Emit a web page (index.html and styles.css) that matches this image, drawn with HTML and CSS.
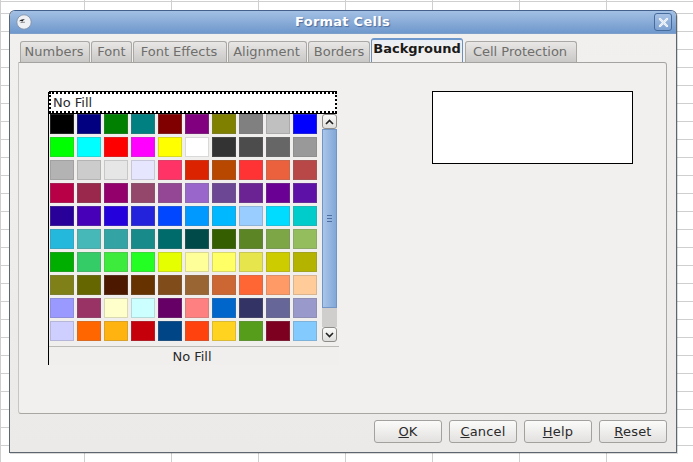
FILE: index.html
```html
<!DOCTYPE html>
<html lang="en">
<head>
<meta charset="utf-8">
<title>Format Cells</title>
<link rel="stylesheet" href="styles.css">
</head>
<body>
<div class="dialog">
  <div class="titlebar">
    <svg class="app-icon" width="16" height="16" viewBox="0 0 16 16"><circle cx="8" cy="8" r="7.2" fill="#eef0f4" stroke="#7d8ea6" stroke-width="0.8"/><path d="M3 7.2 Q5.5 4.6 9 5.6 Q7 6.4 6.6 7.4 Q5 6.6 3 7.2Z" fill="#222"/><path d="M4.5 8.6 L9 8.2" stroke="#666" stroke-width="0.7"/></svg>
    <div class="title">Format Cells</div>
    <div class="close"><svg width="11" height="11" viewBox="0 0 11 11"><path d="M2 2 L9 9 M9 2 L2 9" stroke="#fff" stroke-width="2.4" stroke-linecap="round"/><path d="M2 2 L9 9 M9 2 L2 9" stroke="#dfe8f4" stroke-width="1.2" stroke-linecap="round"/></svg></div>
  </div>
  <div class="body">
    <div class="tabs">
      <div class="tab tab-numbers">Numbers</div>
      <div class="tab tab-font">Font</div>
      <div class="tab tab-effects">Font Effects</div>
      <div class="tab tab-align">Alignment</div>
      <div class="tab tab-borders">Borders</div>
      <div class="tab active">Background</div>
      <div class="tab tab-protect">Cell Protection</div>
    </div>
    <div class="panel">
      <div class="colorset">
        <div class="entry"><span>No Fill</span></div>
        <div class="set-main">
          <div class="swatches">
            <i style="background:#000000"></i><i style="background:#000080"></i><i style="background:#008000"></i><i style="background:#008080"></i><i style="background:#800000"></i><i style="background:#800080"></i><i style="background:#808000"></i><i style="background:#808080"></i><i style="background:#C0C0C0"></i><i style="background:#0000FF"></i>
            <i style="background:#00FF00"></i><i style="background:#00FFFF"></i><i style="background:#FF0000"></i><i style="background:#FF00FF"></i><i style="background:#FFFF00"></i><i style="background:#FFFFFF"></i><i style="background:#333333"></i><i style="background:#4C4C4C"></i><i style="background:#666666"></i><i style="background:#999999"></i>
            <i style="background:#B3B3B3"></i><i style="background:#CCCCCC"></i><i style="background:#E6E6E6"></i><i style="background:#E6E6FF"></i><i style="background:#FF3366"></i><i style="background:#DC2300"></i><i style="background:#B84700"></i><i style="background:#FF3333"></i><i style="background:#EB613D"></i><i style="background:#B84747"></i>
            <i style="background:#B80047"></i><i style="background:#99284C"></i><i style="background:#94006B"></i><i style="background:#94476B"></i><i style="background:#944794"></i><i style="background:#9966CC"></i><i style="background:#6B4794"></i><i style="background:#6B2394"></i><i style="background:#6B0094"></i><i style="background:#5E11A6"></i>
            <i style="background:#280099"></i><i style="background:#4700B8"></i><i style="background:#2300DC"></i><i style="background:#2323DC"></i><i style="background:#0047FF"></i><i style="background:#0099FF"></i><i style="background:#00B8FF"></i><i style="background:#99CCFF"></i><i style="background:#00DCFF"></i><i style="background:#00CCCC"></i>
            <i style="background:#23B8DC"></i><i style="background:#47B8B8"></i><i style="background:#33A3A3"></i><i style="background:#198A8A"></i><i style="background:#006B6B"></i><i style="background:#004A4A"></i><i style="background:#355E00"></i><i style="background:#5C8526"></i><i style="background:#7DA647"></i><i style="background:#94BD5E"></i>
            <i style="background:#00AE00"></i><i style="background:#33CC66"></i><i style="background:#3DEB3D"></i><i style="background:#23FF23"></i><i style="background:#E6FF00"></i><i style="background:#FFFF99"></i><i style="background:#FFFF66"></i><i style="background:#E6E64C"></i><i style="background:#CCCC00"></i><i style="background:#B3B300"></i>
            <i style="background:#808019"></i><i style="background:#666600"></i><i style="background:#4C1900"></i><i style="background:#663300"></i><i style="background:#804C19"></i><i style="background:#996633"></i><i style="background:#CC6633"></i><i style="background:#FF6633"></i><i style="background:#FF9966"></i><i style="background:#FFCC99"></i>
            <i style="background:#9999FF"></i><i style="background:#993366"></i><i style="background:#FFFFCC"></i><i style="background:#CCFFFF"></i><i style="background:#660066"></i><i style="background:#FF8080"></i><i style="background:#0066CC"></i><i style="background:#333366"></i><i style="background:#666699"></i><i style="background:#9999CC"></i>
            <i style="background:#CFCFFF"></i><i style="background:#FF6600"></i><i style="background:#FFB310"></i><i style="background:#C5000B"></i><i style="background:#004586"></i><i style="background:#FF420E"></i><i style="background:#FFD320"></i><i style="background:#579D1C"></i><i style="background:#7E0021"></i><i style="background:#83CAFF"></i>
          </div>
          <div class="scrollbar">
            <div class="sb-btn sb-up"><svg width="9" height="6" viewBox="0 0 9 6"><path d="M1 5 L4.5 1.5 L8 5" fill="none" stroke="#222" stroke-width="1.6"/></svg></div>
            <div class="sb-thumb"><div class="grip"></div></div>
            <div class="sb-trough"></div>
            <div class="sb-btn sb-down"><svg width="9" height="6" viewBox="0 0 9 6"><path d="M1 1 L4.5 4.5 L8 1" fill="none" stroke="#222" stroke-width="1.6"/></svg></div>
          </div>
        </div>
        <div class="set-label">No Fill</div>
      </div>
      <div class="preview"></div>
    </div>
    <div class="footer">
      <div class="btn"><u>O</u>K</div>
      <div class="btn"><u>C</u>ancel</div>
      <div class="btn"><u>H</u>elp</div>
      <div class="btn"><u>R</u>eset</div>
    </div>
  </div>
</div>
</body>
</html>
```
FILE: styles.css
```css
* { box-sizing: border-box; }
html, body { margin: 0; padding: 0; }
body {
  width: 693px;
  height: 462px;
  overflow: hidden;
  padding: 10px 0 0 9px;
  font: 13px/16px "DejaVu Sans", sans-serif;
  background-color: #fff;
  background-image:
    repeating-linear-gradient(90deg, #cfcfcf 0 1px, transparent 1px 87px),
    repeating-linear-gradient(180deg, #cfcfcf 0 1px, transparent 1px 18px);
  background-position: 84px 0, 0 13px;
}
.dialog {
  width: 668px;
  height: 443px;
  border: 1px solid #5d6670;
  border-top-color: #44608c;
  border-radius: 6px 6px 0 0;
  background: #edecea;
  overflow: hidden;
  box-shadow: 1px 1px 0 rgba(0, 0, 0, .15);
}
.titlebar {
  height: 23px;
  display: flex;
  align-items: center;
  padding: 0 4px 0 6px;
  background: linear-gradient(#a3c0e4, #6f98cc);
  border-bottom: 1px solid #7d9fca;
}
.app-icon { flex: none; }
.title {
  flex: 1;
  padding-right: 1px;
  text-align: center;
  font-weight: bold;
  color: #fff;
  letter-spacing: .25px;
  text-shadow: 1px 1px 1px rgba(40, 70, 120, .6);
}
.close {
  width: 18px;
  height: 18px;
  display: flex;
  align-items: center;
  justify-content: center;
  border: 1px solid #466c9e;
  border-radius: 3px;
  background: linear-gradient(#a8c2e4, #7ea2d2);
}
.body {
  height: 419px;
  padding: 6px 9px 0 8px;
  background: linear-gradient(#f1f0ee, #ebeae8);
}
.tabs {
  height: 22px;
  display: flex;
  align-items: flex-end;
  padding-left: 2px;
  gap: 1px;
  position: relative;
  z-index: 1;
}
.tab {
  height: 21px;
  padding: 2px 4px 0;
  text-align: center;
  color: #6e6e6c;
  border: 1px solid #aaa8a5;
  border-bottom: 0;
  border-radius: 3px 3px 0 0;
  background: linear-gradient(#e8e7e5, #c9c8c6);
  box-shadow: 0 1px 0 #a5a3a0;
}
.tab-numbers { width: 70px; padding: 2px 5px 0 3px; }
.tab-font { width: 41px; }
.tab-effects { width: 94px; padding: 2px 5px 0 3px; }
.tab-align { width: 79px; padding: 2px 5px 0 3px; }
.tab-borders { width: 62px; }
.tab-protect { width: 112px; margin-left: 1px; padding: 2px 5px 0 3px; }
.tab.active {
  width: 92px;
  height: 24px;
  padding: 1px 0 0;
  font-weight: bold;
  color: #1b1b1b;
  border-color: #6d8fbd;
  border-top: 2px solid #6f98cc;
  background: linear-gradient(#e9eef5, #f1f0ee 40%);
  box-shadow: none;
}
.panel {
  height: 352px;
  display: flex;
  align-items: flex-start;
  padding: 28px 0 0 29px;
  border: 1px solid #a9a7a4;
  border-radius: 0 3px 3px 3px;
  background: #f1f0ee;
  border-top-color: #a5a3a0;
  border-left-color: #c8c6c3;
}
.colorset {
  width: 291px;
  height: 273px;
  margin-top: 1px;
  border-left: 1px solid #000;
  background: #f0efed;
}
.entry {
  width: 288px;
  height: 21px;
  background: #fff;
  border: 2px dotted #000;
  box-shadow: 0 -1px 0 #000, 0 1px 0 #000;
  line-height: 17px;
  padding-left: 2px;
  color: #2a2a2a;
}
.set-main {
  display: flex;
  padding: 1px 0 0 1px;
  height: 234px;
  border-bottom: 1px solid #bdbbb8;
}
.swatches {
  width: 271px;
  display: grid;
  grid-template-columns: repeat(10, 24px);
  grid-auto-rows: 20px;
  column-gap: 3px;
  row-gap: 3px;
  align-content: start;
}
.swatches i {
  display: block;
  border: 1px solid rgba(120, 120, 120, .28);
}
.scrollbar {
  width: 15px;
  height: 228px;
  margin-left: 1px;
  display: flex;
  flex-direction: column;
}
.sb-btn {
  flex: none;
  height: 15px;
  display: flex;
  align-items: center;
  justify-content: center;
  border: 1px solid #8f8d8a;
  border-radius: 3px;
  background: linear-gradient(#fbfbfa, #dededc);
}
.sb-thumb {
  flex: none;
  height: 179px;
  display: flex;
  align-items: center;
  justify-content: center;
  border: 1px solid #7095c6;
  background: linear-gradient(90deg, #a9c5e8, #82a8d8);
}
.grip {
  width: 5px;
  height: 7px;
  border-top: 1px solid #4d6f9f;
  border-bottom: 1px solid #4d6f9f;
  background: linear-gradient(#4d6f9f, #4d6f9f) center / 100% 1px no-repeat;
}
.sb-trough {
  flex: 1;
  background: #cfcecc;
}
.set-label {
  text-align: center;
  line-height: 18px;
  color: #2a2a2a;
  padding: 1px 4px 0 0;
}
.preview {
  width: 201px;
  height: 73px;
  margin-left: 93px;
  border: 1px solid #000;
  background: #fff;
}
.footer {
  display: flex;
  justify-content: flex-end;
  gap: 7px;
  padding-top: 6px;
}
.btn {
  width: 68px;
  height: 23px;
  text-align: center;
  line-height: 21px;
  color: #2a2a2a;
  letter-spacing: .2px;
  border: 1px solid #a3a19e;
  border-radius: 3px;
  background: linear-gradient(#fbfbfa, #e2e1df);
}
```
